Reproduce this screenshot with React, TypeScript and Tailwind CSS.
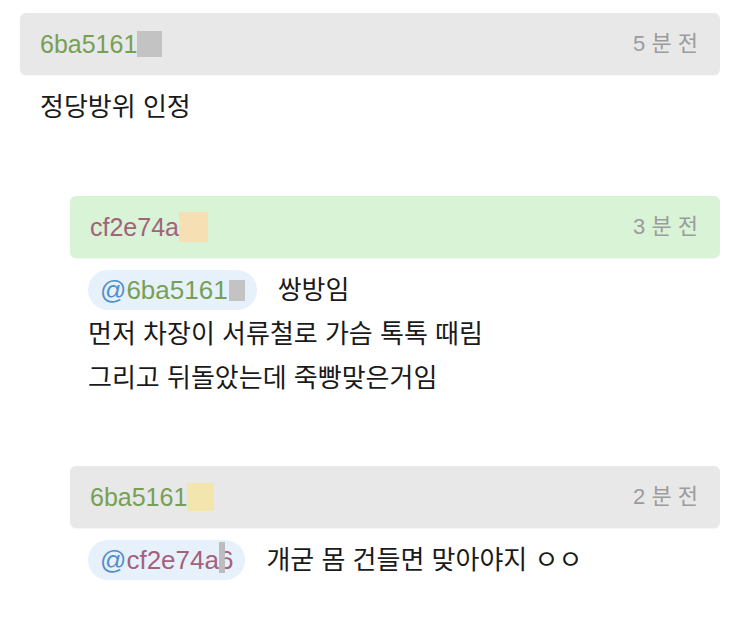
import { FC, ReactNode } from 'react';

const KR = "font-['Liberation_Sans','Noto_Sans_CJK_KR',sans-serif]";

const Header: FC<{
  name: string;
  nameColor: string;
  block: string;
  time: string;
  bg: string;
}> = ({
  name, nameColor, block, time, bg,
}) => (
  <div className={`flex h-[62px] items-center justify-between rounded-md pl-[20px] pr-[22px] shadow-[0_1px_1px_rgba(0,0,0,0.04)] ${bg}`}>
    <div className="flex items-center">
      <span className={`text-[25px] leading-none ${nameColor}`}>{name}</span>
      <span className={block} />
    </div>
    <span className="text-[22px] leading-none text-[#9c9c9c]">{time}</span>
  </div>
);

const Mention: FC<{ children: ReactNode }> = ({ children }) => (
  <span className="mr-[21px] inline-flex h-[40px] items-center rounded-full bg-[#e7f1fb] pl-[12px] pr-[12px] text-[26px] leading-none">
    <span className="text-[#4f8fcb]">@</span>
    {children}
  </span>
);

const App: FC = () => (
  <div className={`min-h-[633px] bg-white px-[20px] pt-[13px] text-[#1a1a1a] ${KR}`}>
    <Header
      name="6ba5161"
      nameColor="text-[#76a055]"
      block="h-[26px] w-[25px] bg-[#c3c3c3]"
      time="5 분 전"
      bg="bg-[#e8e8e8]"
    />
    <p className="mt-[14px] pl-[20px] text-[26px] leading-[36px]">정당방위 인정</p>

    <div className="ml-[50px] mt-[71px]">
      <Header
        name="cf2e74a"
        nameColor="text-[#a2627c]"
        block="h-[30px] w-[29px] bg-[#f6dfb3]"
        time="3 분 전"
        bg="bg-[#d9f3d6]"
      />
      <div className="mt-[10px] pl-[18px] text-[26px] leading-[44px]">
        <div className="flex h-[44px] items-center">
          <Mention>
            <span className="text-[#76a055]">6ba5161</span>
            <span className="ml-[1px] h-[21px] w-[16px] bg-[#c3c3c3]" />
          </Mention>
          <span>쌍방임</span>
        </div>
        <p>먼저 차장이 서류철로 가슴 톡톡 때림</p>
        <p>그리고 뒤돌았는데 죽빵맞은거임</p>
      </div>
    </div>

    <div className="ml-[50px] mt-[66px]">
      <Header
        name="6ba5161"
        nameColor="text-[#76a055]"
        block="h-[28px] w-[27px] bg-[#f2e5ad]"
        time="2 분 전"
        bg="bg-[#e8e8e8]"
      />
      <div className="mt-[10px] pl-[18px] text-[26px] leading-[44px]">
        <div className="flex h-[44px] items-center">
          <Mention>
            <span className="text-[#a2627c]">cf2e74a</span>
            <span className="relative text-[#a2627c]">
              6
              <span className="absolute left-0 top-[-5px] h-[31px] w-[6px] bg-[#bdbdbd]" />
            </span>
          </Mention>
          <span>개굳 몸 건들면 맞아야지 ㅇㅇ</span>
        </div>
      </div>
    </div>
  </div>
);

export default App;
